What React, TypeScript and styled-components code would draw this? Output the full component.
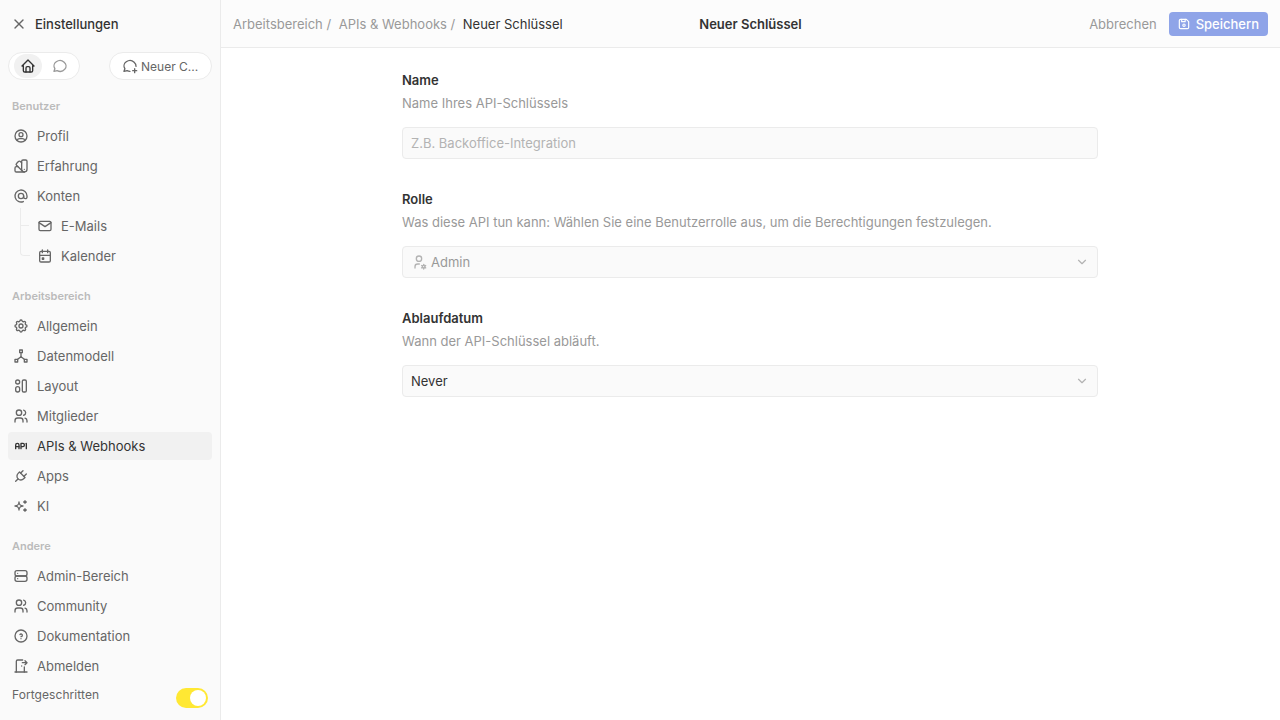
import React from 'react';
import { createGlobalStyle, styled } from 'styled-components';
import {
    TbApi,
    TbAt,
    TbCalendarEvent,
    TbChevronDown,
    TbColorSwatch,
    TbDeviceFloppy,
    TbDoorExit,
    TbHelpCircle,
    TbHierarchy2,
    TbHome,
    TbMail,
    TbMessageCircle,
    TbMessageCirclePlus,
    TbPlug,
    TbServer,
    TbSettings,
    TbSparkles,
    TbUserCircle,
    TbUserCog,
    TbUsers,
    TbX,
} from 'react-icons/tb';

const GlobalStyle = createGlobalStyle`
    html, body {
        margin: 0;
        height: 100%;
        background: #ffffff;
        font-family: Inter, "Noto Sans", sans-serif;
        font-size: 13px;
        color: #333333;
    }
    * {
        box-sizing: border-box;
    }
`;

const Page = styled.div`
    display: flex;
    width: 1280px;
    height: 720px;
    overflow: hidden;
`;

const Sidebar = styled.aside`
    display: flex;
    flex-direction: column;
    flex: 0 0 221px;
    padding: 12px 8px 0;
    background: #fafafa;
    border-right: 1px solid #ebebeb;
`;

const SidebarTitle = styled.div`
    display: flex;
    align-items: center;
    gap: 8px;
    height: 24px;
    padding-left: 3px;
    color: #333333;
    font-weight: 500;
    svg {
        color: #666666;
    }
`;

const ChatRow = styled.div`
    display: flex;
    justify-content: space-between;
    margin-top: 16px;
`;

const Pill = styled.div`
    display: flex;
    align-items: center;
    gap: 4px;
    height: 28px;
    padding: 0 5px;
    background: #ffffff;
    border: 1px solid #ebebeb;
    border-radius: 14px;
`;

const PillTab = styled.div<{ $active?: boolean }>`
    display: flex;
    align-items: center;
    justify-content: center;
    width: 28px;
    height: 24px;
    border-radius: 12px;
    background: ${p => (p.$active ? '#f1f1f1' : 'transparent')};
    color: ${p => (p.$active ? '#333333' : '#999999')};
`;

const NewChat = styled(Pill)`
    width: 103px;
    gap: 3px;
    padding: 0 0 0 12px;
    color: #666666;
    font-size: 12px;
    white-space: nowrap;
`;

const SectionLabel = styled.div`
    height: 16px;
    margin: 18px 0 8px;
    padding-left: 4px;
    color: #bbbbbb;
    font-size: 11px;
    font-weight: 600;
    line-height: 16px;
`;

const NavList = styled.div`
    display: flex;
    flex-direction: column;
    gap: 2px;
`;

const NavItem = styled.div<{ $active?: boolean; $sub?: boolean; $last?: boolean }>`
    position: relative;
    display: flex;
    align-items: center;
    gap: 8px;
    height: 28px;
    padding-left: ${p => (p.$sub ? '29px' : '5px')};
    border-radius: 4px;
    background: ${p => (p.$active ? '#f1f1f1' : 'transparent')};
    color: ${p => (p.$active ? '#333333' : '#666666')};
    svg {
        flex: none;
    }
    ${p =>
        p.$sub &&
        `
        &::before {
            content: '';
            position: absolute;
            left: 12px;
            top: ${p.$last ? '-16px' : '-4px'};
            height: ${p.$last ? '29px' : '32px'};
            width: 9px;
            border-left: 1px solid #ebebeb;
            border-bottom: ${p.$last ? '1px solid #ebebeb' : 'none'};
            border-bottom-left-radius: ${p.$last ? '4px' : '0'};
        }
        &::after {
            content: '';
            position: absolute;
            left: 13px;
            top: 13px;
            width: 8px;
            border-top: ${p.$last ? 'none' : '1px solid #ebebeb'};
        }
    `}
`;

const AdvancedRow = styled.div`
    display: flex;
    justify-content: space-between;
    margin-top: 6px;
    padding: 0 4px;
    color: #666666;
    font-size: 12px;
    font-weight: 400;
    letter-spacing: 0.07px;
    line-height: 18px;
`;

const Toggle = styled.div`
    display: flex;
    justify-content: flex-end;
    align-items: center;
    width: 32px;
    height: 20px;
    margin-top: 2px;
    padding: 2px;
    border-radius: 10px;
    background: #ffe833;
`;

const ToggleKnob = styled.div`
    width: 16px;
    height: 16px;
    border-radius: 50%;
    background: #ffffff;
`;

const Main = styled.main`
    display: flex;
    flex-direction: column;
    flex: 1;
    min-width: 0;
`;

const TopBar = styled.header`
    display: grid;
    grid-template-columns: 1fr auto 1fr;
    align-items: center;
    height: 48px;
    padding: 0 12px;
    background: #fcfcfc;
    border-bottom: 1px solid #ebebeb;
`;

const Breadcrumbs = styled.nav`
    display: flex;
    gap: 7.5px;
    color: #999999;
    white-space: nowrap;
`;

const CurrentCrumb = styled.span`
    color: #333333;
`;

const PageTitle = styled.div`
    color: #333333;
    font-weight: 600;
`;

const Actions = styled.div`
    display: flex;
    justify-content: flex-end;
    align-items: center;
    gap: 12px;
`;

const CancelButton = styled.div`
    color: #999999;
`;

const SaveButton = styled.div`
    display: flex;
    align-items: center;
    gap: 5px;
    height: 24px;
    padding: 0 9px 0 8px;
    border-radius: 4px;
    background: #8fa4e8;
    color: #ffffff;
    font-weight: 500;
`;

const Form = styled.div`
    display: flex;
    flex-direction: column;
    gap: 32px;
    width: 696px;
    margin-left: 181px;
    padding-top: 24px;
`;

const Field = styled.section`
    display: flex;
    flex-direction: column;
`;

const FieldLabel = styled.div`
    color: #333333;
    font-weight: 600;
    line-height: 17px;
`;

const FieldHint = styled.div`
    margin-top: 6px;
    margin-bottom: 15px;
    color: #999999;
    line-height: 17px;
`;

const Control = styled.div<{ $muted?: boolean }>`
    display: flex;
    align-items: center;
    gap: 4px;
    height: 32px;
    padding: 0 8px;
    background: #fafafa;
    border: 1px solid #ebebeb;
    border-radius: 4px;
    color: ${p => (p.$muted ? '#b3b3b3' : '#333333')};
    svg {
        flex: none;
        color: #b3b3b3;
    }
`;

const ControlValue = styled.span<{ $muted?: boolean }>`
    flex: 1;
    color: ${p => (p.$muted ? '#999999' : 'inherit')};
`;

const LayoutIcon: React.FC = () => (
    <svg width={16} height={16} viewBox="0 0 24 24" fill="none" stroke="currentColor" strokeWidth={2}>
        <rect x="4" y="3" width="6" height="6" rx="3" />
        <rect x="4" y="13" width="6" height="8" rx="3" />
        <rect x="14" y="3" width="6" height="18" rx="2" />
    </svg>
);

const sections = [
    {
        label: 'Benutzer',
        items: [
            { icon: TbUserCircle, text: 'Profil' },
            { icon: TbColorSwatch, text: 'Erfahrung' },
            { icon: TbAt, text: 'Konten' },
            { icon: TbMail, text: 'E-Mails', sub: true },
            { icon: TbCalendarEvent, text: 'Kalender', sub: true, last: true },
        ],
    },
    {
        label: 'Arbeitsbereich',
        items: [
            { icon: TbSettings, text: 'Allgemein' },
            { icon: TbHierarchy2, text: 'Datenmodell' },
            { icon: LayoutIcon, text: 'Layout' },
            { icon: TbUsers, text: 'Mitglieder' },
            { icon: TbApi, text: 'APIs & Webhooks', active: true },
            { icon: TbPlug, text: 'Apps' },
            { icon: TbSparkles, text: 'KI' },
        ],
    },
    {
        label: 'Andere',
        items: [
            { icon: TbServer, text: 'Admin-Bereich' },
            { icon: TbUsers, text: 'Community' },
            { icon: TbHelpCircle, text: 'Dokumentation' },
            { icon: TbDoorExit, text: 'Abmelden' },
        ],
    },
];

const App: React.FC = () => {
    return (
        <React.Fragment>
            <GlobalStyle />
            <Page>
                <Sidebar>
                    <SidebarTitle>
                        <TbX size={16} />
                        Einstellungen
                    </SidebarTitle>
                    <ChatRow>
                        <Pill>
                            <PillTab $active>
                                <TbHome size={16} />
                            </PillTab>
                            <PillTab>
                                <TbMessageCircle size={16} />
                            </PillTab>
                        </Pill>
                        <NewChat>
                            <TbMessageCirclePlus size={16} />
                            Neuer C...
                        </NewChat>
                    </ChatRow>
                    {sections.map(section => (
                        <React.Fragment key={section.label}>
                            <SectionLabel>{section.label}</SectionLabel>
                            <NavList>
                                {section.items.map(item => (
                                    <NavItem
                                        key={item.text}
                                        $active={item.active}
                                        $sub={item.sub}
                                        $last={item.last}
                                    >
                                        <item.icon size={16} />
                                        {item.text}
                                    </NavItem>
                                ))}
                            </NavList>
                        </React.Fragment>
                    ))}
                    <AdvancedRow>
                        Fortgeschritten
                        <Toggle>
                            <ToggleKnob />
                        </Toggle>
                    </AdvancedRow>
                </Sidebar>
                <Main>
                    <TopBar>
                        <Breadcrumbs>
                            <span>Arbeitsbereich /</span>
                            <span>APIs & Webhooks /</span>
                            <CurrentCrumb>Neuer Schlüssel</CurrentCrumb>
                        </Breadcrumbs>
                        <PageTitle>Neuer Schlüssel</PageTitle>
                        <Actions>
                            <CancelButton>Abbrechen</CancelButton>
                            <SaveButton>
                                <TbDeviceFloppy size={14} />
                                Speichern
                            </SaveButton>
                        </Actions>
                    </TopBar>
                    <Form>
                        <Field>
                            <FieldLabel>Name</FieldLabel>
                            <FieldHint>Name Ihres API-Schlüssels</FieldHint>
                            <Control $muted>
                                <ControlValue>Z.B. Backoffice-Integration</ControlValue>
                            </Control>
                        </Field>
                        <Field>
                            <FieldLabel>Rolle</FieldLabel>
                            <FieldHint>
                                Was diese API tun kann: Wählen Sie eine Benutzerrolle aus, um die Berechtigungen
                                festzulegen.
                            </FieldHint>
                            <Control $muted>
                                <TbUserCog size={16} />
                                <ControlValue $muted>Admin</ControlValue>
                                <TbChevronDown size={14} />
                            </Control>
                        </Field>
                        <Field>
                            <FieldLabel>Ablaufdatum</FieldLabel>
                            <FieldHint>Wann der API-Schlüssel abläuft.</FieldHint>
                            <Control>
                                <ControlValue>Never</ControlValue>
                                <TbChevronDown size={14} />
                            </Control>
                        </Field>
                    </Form>
                </Main>
            </Page>
        </React.Fragment>
    );
};

export default App;
